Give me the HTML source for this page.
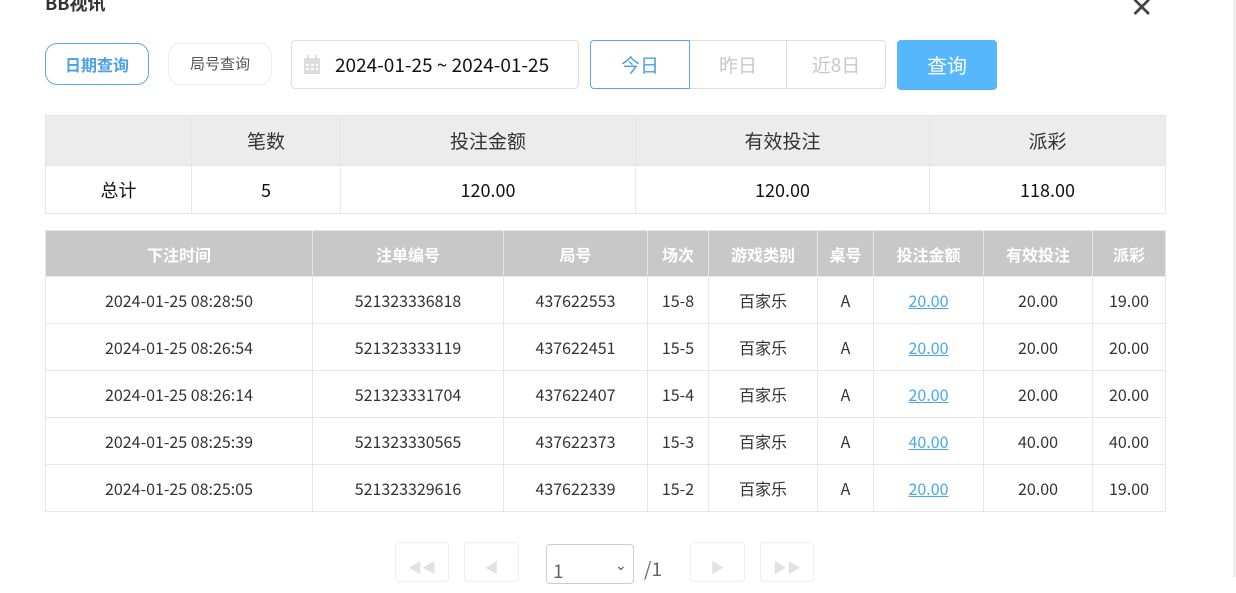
<!DOCTYPE html>
<html><head><meta charset="utf-8"><style>
*{margin:0;padding:0;box-sizing:border-box}
body{width:1236px;height:577px;overflow:hidden;background:#fff;font-family:"Noto Sans CJK SC","Liberation Sans",sans-serif;position:relative;color:#222}
.a{position:absolute}
table{border-collapse:collapse;position:absolute;left:45px;table-layout:fixed}
td,th{border:1px solid #e6e6e6;text-align:center;font-weight:normal;vertical-align:middle;line-height:20px;padding:0}
#s th{background:#ececec;height:50px;font-size:19px;color:#333}
#s td{height:48px;font-size:18px;color:#111}
#d th{background:#c8c8c8;color:#fff;font-weight:bold;height:46px;font-size:16px;border-color:#e8e8e8}
#d td{height:47px;font-size:16px;color:#333}
#d td.l{color:#4aa7ec;text-decoration:underline}
.pb{position:absolute;top:542px;height:40px;border:1px solid #eee;border-radius:4px;color:#e2e2e2;font-size:14px;text-align:center;line-height:50px}
</style></head><body>
<div class="a" style="left:1233px;top:0;width:3px;height:577px;background:#efefef"></div>
<div class="a" style="left:45px;top:-10px;font-size:18px;font-weight:bold;color:#333">BB视讯</div>
<div class="a" style="left:1130px;top:-14px;font-size:28px;color:#444">✕</div>
<div class="a" style="left:45px;top:43px;width:104px;height:42px;border:1px solid #5aaae8;border-radius:12px;color:#4aa0e6;font-size:16px;font-weight:bold;text-align:center;line-height:40px">日期查询</div>
<div class="a" style="left:168px;top:43px;width:104px;height:42px;border:1px solid #eee;border-radius:12px;color:#555;font-size:15px;text-align:center;line-height:40px">局号查询</div>
<div class="a" style="left:291px;top:40px;width:288px;height:49px;border:1px solid #ddd;border-radius:4px">
<svg class="a" style="left:11px;top:14px" width="18" height="20" viewBox="0 0 18 20"><rect x="1" y="3" width="16" height="16" rx="1" fill="#ddd"/><rect x="4" y="0" width="2" height="5" fill="#ddd"/><rect x="12" y="0" width="2" height="5" fill="#ddd"/><g fill="#fff"><rect x="3" y="9" width="3" height="2"/><rect x="8" y="9" width="3" height="2"/><rect x="13" y="9" width="2" height="2"/><rect x="3" y="13" width="3" height="2"/><rect x="8" y="13" width="3" height="2"/><rect x="13" y="13" width="2" height="2"/></g></svg>
<div class="a" style="left:43px;top:11px;font-size:19px;color:#111;line-height:26px">2024-01-25 ~ 2024-01-25</div></div>
<div class="a" style="left:590px;top:40px;width:296px;height:49px;border:1px solid #ddd;border-radius:4px"></div>
<div class="a" style="left:590px;top:40px;width:100px;height:49px;border:1px solid #5aaae8;border-radius:4px 0 0 4px;color:#4aa0e6;font-size:19px;text-align:center;line-height:47px">今日</div>
<div class="a" style="left:690px;top:41px;width:97px;height:47px;border-right:1px solid #ddd;color:#c8c8c8;font-size:19px;text-align:center;line-height:47px">昨日</div>
<div class="a" style="left:787px;top:41px;width:98px;height:47px;color:#c8c8c8;font-size:19px;text-align:center;line-height:47px">近8日</div>
<div class="a" style="left:897px;top:40px;width:100px;height:50px;background:#57b7fc;border-radius:4px;color:#fff;font-size:20px;text-align:center;line-height:50px">查询</div>
<table id="s" style="top:115px;width:1120px"><colgroup><col style="width:146px"><col style="width:149px"><col style="width:295px"><col style="width:294px"><col style="width:236px"></colgroup>
<tr><th></th><th>笔数</th><th>投注金额</th><th>有效投注</th><th>派彩</th></tr>
<tr><td>总计</td><td>5</td><td>120.00</td><td>120.00</td><td>118.00</td></tr></table>
<table id="d" style="top:230px;width:1120px"><colgroup><col style="width:267px"><col style="width:191px"><col style="width:144px"><col style="width:61px"><col style="width:109px"><col style="width:56px"><col style="width:110px"><col style="width:109px"><col style="width:73px"></colgroup>
<tr><th>下注时间</th><th>注单编号</th><th>局号</th><th>场次</th><th>游戏类别</th><th>桌号</th><th>投注金额</th><th>有效投注</th><th>派彩</th></tr>
<tr><td>2024-01-25 08:28:50</td><td>521323336818</td><td>437622553</td><td>15-8</td><td>百家乐</td><td>A</td><td class="l">20.00</td><td>20.00</td><td>19.00</td></tr>
<tr><td>2024-01-25 08:26:54</td><td>521323333119</td><td>437622451</td><td>15-5</td><td>百家乐</td><td>A</td><td class="l">20.00</td><td>20.00</td><td>20.00</td></tr>
<tr><td>2024-01-25 08:26:14</td><td>521323331704</td><td>437622407</td><td>15-4</td><td>百家乐</td><td>A</td><td class="l">20.00</td><td>20.00</td><td>20.00</td></tr>
<tr><td>2024-01-25 08:25:39</td><td>521323330565</td><td>437622373</td><td>15-3</td><td>百家乐</td><td>A</td><td class="l">40.00</td><td>40.00</td><td>40.00</td></tr>
<tr><td>2024-01-25 08:25:05</td><td>521323329616</td><td>437622339</td><td>15-2</td><td>百家乐</td><td>A</td><td class="l">20.00</td><td>20.00</td><td>19.00</td></tr></table>
<div class="pb" style="left:395px;width:54px">◀◀</div>
<div class="pb" style="left:464px;width:55px">◀</div>
<div class="a" style="left:546px;top:544px;width:88px;height:40px;border:1px solid #ccc;border-radius:4px"><span class="a" style="left:6px;top:12px;font-size:19px;color:#666">1</span><span class="a" style="left:68px;top:10px;font-size:14px;color:#555">⌄</span></div>
<div class="a" style="left:644px;top:555px;font-size:19px;color:#666">/1</div>
<div class="pb" style="left:690px;width:55px">▶</div>
<div class="pb" style="left:760px;width:54px">▶▶</div>
</body></html>
